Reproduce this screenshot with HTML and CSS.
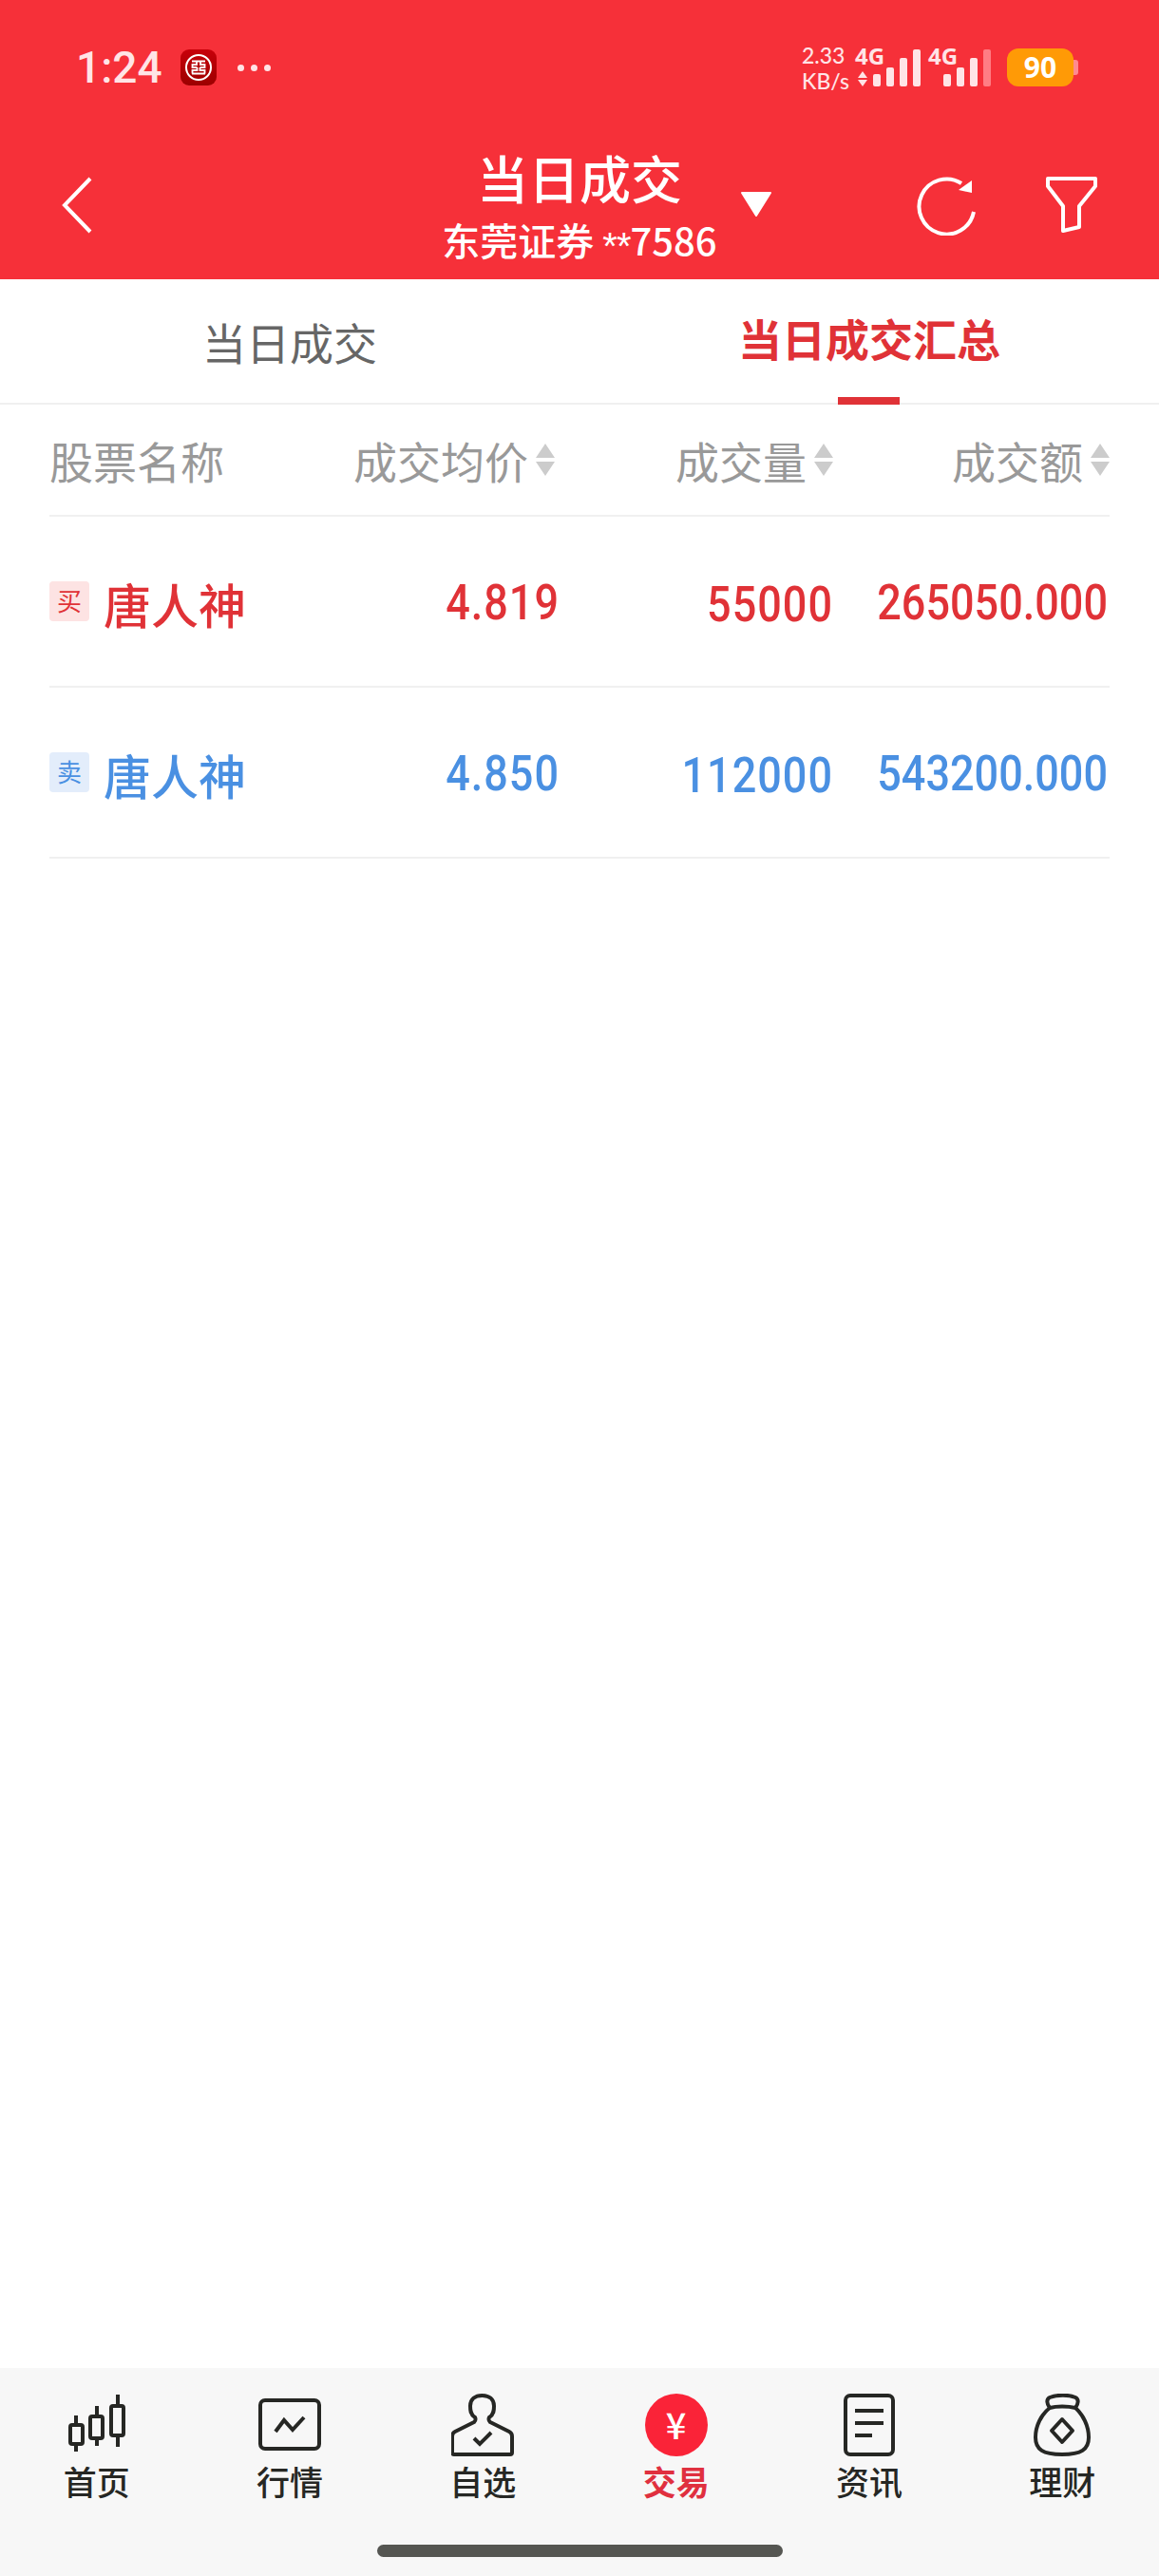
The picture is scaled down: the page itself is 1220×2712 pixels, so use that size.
FILE: index.html
```html
<!DOCTYPE html>
<html lang="zh-CN">
<head>
    <meta charset="UTF-8">
    <meta name="viewport" content="width=device-width, initial-scale=1.0">
    <title>当日成交</title>
    <link rel="stylesheet" href="styles.css">
</head>
<body>
    <div class="page">
        <header class="top">
            <div class="status">
                <div class="status-left">
                    <span class="clock">1:24</span>
                    <svg class="bank-icon" width="38" height="38" viewBox="0 0 38 38">
                        <defs>
                            <linearGradient id="bankbg" x1="0" y1="0" x2="0" y2="1">
                                <stop offset="0" stop-color="#c8000a"/>
                                <stop offset="1" stop-color="#9c0000"/>
                            </linearGradient>
                        </defs>
                        <rect width="38" height="38" rx="9" fill="url(#bankbg)"/>
                        <circle cx="19" cy="19" r="13" fill="none" stroke="#fff" stroke-width="2"/>
                        <path d="M12 12.500H26M12 25.500H26M17 12.500V16H12.500V19H17.500M21 12.500V16H25.500V19H20.500M17.500 19V22H12.500V25.500M20.500 19V22H25.500V25.500" fill="none" stroke="#fff" stroke-width="1.800"/>
                    </svg>
                    <span class="dots"><i></i><i></i><i></i></span>
                </div>
                <div class="status-right">
                    <div class="speed"><span>2.33</span><span>KB/s</span></div>
                    <div class="signal">
                        <span class="net">4G</span>
                        <svg class="updown" width="10" height="16" viewBox="0 0 10 16">
                            <path d="M5 0L10 7H0ZM5 16L0 9H10Z" fill="#ffe4e6"/>
                        </svg>
                        <div class="bars"><i class="b1"></i><i class="b2"></i><i class="b3"></i><i class="b4"></i></div>
                    </div>
                    <div class="signal signal-two">
                        <span class="net">4G</span>
                        <div class="bars"><i class="b1"></i><i class="b2"></i><i class="b3"></i><i class="b4 off"></i></div>
                    </div>
                    <div class="battery">90</div>
                </div>
            </div>
            <nav class="bar">
                <div class="bar-left">
                    <svg width="34" height="60" viewBox="0 0 34 60">
                        <path d="M31 2L4 30L31 58" fill="none" stroke="#fff" stroke-width="4"/>
                    </svg>
                </div>
                <div class="title-box">
                    <div class="title">当日成交</div>
                    <div class="account">东莞证券 <span class="stars">**</span>7586</div>
                </div>
                <div class="bar-right">
                    <svg class="caret" width="36" height="28" viewBox="0 0 36 28">
                        <path d="M3 2H33L18 26Z" fill="#fff" stroke="#fff" stroke-width="2" stroke-linejoin="round"/>
                    </svg>
                    <svg class="refresh" width="62" height="64" viewBox="0 0 62 64">
                        <path d="M60 39A29 29 0 1 1 47 9" fill="none" stroke="#fff" stroke-width="4"/>
                        <path d="M58 6V19L44 16Z" fill="#fff"/>
                    </svg>
                    <svg class="filter" width="56" height="62" viewBox="0 0 56 62">
                        <path d="M3 3H53V11L36 32V54L19 58V32L3 11Z" fill="none" stroke="#fff" stroke-width="4" stroke-linejoin="round"/>
                    </svg>
                </div>
            </nav>
        </header>

        <div class="tabs">
            <div class="tab">当日成交</div>
            <div class="tab active">当日成交汇总</div>
        </div>

        <main class="list">
            <div class="row head">
                <div class="name">股票名称</div>
                <div class="num col-avg">成交均价<svg class="sort" width="20" height="34" viewBox="0 0 20 34"><path d="M10 0L20 15H0ZM10 34L0 19H20Z" fill="#ccc"/></svg></div>
                <div class="num">成交量<svg class="sort" width="20" height="34" viewBox="0 0 20 34"><path d="M10 0L20 15H0ZM10 34L0 19H20Z" fill="#ccc"/></svg></div>
                <div class="num">成交额<svg class="sort" width="20" height="34" viewBox="0 0 20 34"><path d="M10 0L20 15H0ZM10 34L0 19H20Z" fill="#ccc"/></svg></div>
            </div>
            <div class="row deal buy">
                <div class="name"><span class="tag">买</span><span class="stock">唐人神</span></div>
                <div class="num"><span class="digits wide">4.819</span></div>
                <div class="num"><span class="digits low wide">55000</span></div>
                <div class="num"><span class="digits">265050.000</span></div>
            </div>
            <div class="row deal sell">
                <div class="name"><span class="tag">卖</span><span class="stock">唐人神</span></div>
                <div class="num"><span class="digits wide">4.850</span></div>
                <div class="num"><span class="digits low wide">112000</span></div>
                <div class="num"><span class="digits">543200.000</span></div>
            </div>
        </main>

        <footer class="dock">
            <div class="dock-items">
                <div class="dock-item">
                    <svg width="60" height="66" viewBox="0 0 60 66">
                        <g fill="none" stroke="#262724" stroke-width="4">
                            <path d="M8 23V33M8 53V61"/>
                            <rect x="2" y="33" width="13" height="20" rx="2"/>
                            <path d="M30 13V24M30 47V55"/>
                            <rect x="23" y="24" width="13" height="23" rx="2"/>
                            <path d="M52 1V13M52 44V56"/>
                            <rect x="45" y="13" width="13" height="31" rx="2"/>
                        </g>
                    </svg>
                    <span>首页</span>
                </div>
                <div class="dock-item">
                    <svg width="68" height="66" viewBox="0 0 68 66">
                        <rect x="3" y="7" width="62" height="51" rx="5" fill="none" stroke="#262724" stroke-width="4"/>
                        <path d="M19 40L28 28L37 38L49 25" fill="none" stroke="#262724" stroke-width="4"/>
                    </svg>
                    <span>行情</span>
                </div>
                <div class="dock-item">
                    <svg width="66" height="66" viewBox="0 0 66 66">
                        <path d="M25 25C20 22 20 17 20 13C20 6 25 2 32.500 2C40 2 45 6 45 13C45 17 45 22 40 25C39 27 39 28 41 30L61 40C63 41 64 43 64 45V62Q64 64 62 64H3Q1 64 1 62V45C1 43 2 41 4 40L24 30C26 28 26 27 25 25Z" fill="none" stroke="#262724" stroke-width="4" stroke-linejoin="round"/>
                        <path d="M24 47L30 53L42 41" fill="none" stroke="#262724" stroke-width="4"/>
                    </svg>
                    <span>自选</span>
                </div>
                <div class="dock-item current">
                    <div class="yen">¥</div>
                    <span>交易</span>
                </div>
                <div class="dock-item">
                    <svg width="54" height="66" viewBox="0 0 54 66">
                        <rect x="2" y="2" width="50" height="62" rx="5" fill="none" stroke="#262724" stroke-width="4"/>
                        <path d="M12 18H42M12 31H42M12 44H30" fill="none" stroke="#262724" stroke-width="4"/>
                    </svg>
                    <span>资讯</span>
                </div>
                <div class="dock-item">
                    <svg width="60" height="66" viewBox="0 0 60 66">
                        <g fill="none" stroke="#262724" stroke-width="4" stroke-linejoin="round">
                            <path d="M17 15C14 11 13 6 17 4C25 1 37 1 44 4C48 6 47 11 44 15"/>
                            <path d="M17 15C8 22 2 34 2 46C2 59 10 64 30 64C50 64 58 59 58 46C58 34 52 22 44 15C36 13 24 13 17 15Z"/>
                            <path d="M30 27L41 39L30 51L19 39Z"/>
                        </g>
                    </svg>
                    <span>理财</span>
                </div>
            </div>
            <div class="home-bar"></div>
        </footer>
    </div>
</body>
</html>
```

FILE: styles.css
```css
* {
    box-sizing: border-box;
}
body {
    margin: 0;
    background-color: #fff;
    font-family: "Noto Sans CJK SC", "Noto Sans", sans-serif;
}
.page {
    width: 1220px;
    height: 2712px;
    display: flex;
    flex-direction: column;
    overflow: hidden;
}

/* 顶部红色区域 */
.top {
    height: 294px;
    background-color: #f63039;
    color: #fff;
    flex-shrink: 0;
}
.status {
    height: 140px;
    padding: 51px 90px 0 80px;
    display: flex;
    justify-content: space-between;
    align-items: flex-start;
}
.status-left {
    display: flex;
    align-items: center;
    height: 40px;
}
.clock {
    font-family: Roboto, sans-serif;
    font-size: 46px;
    font-weight: 500;
    line-height: 40px;
    color: #ffe4e6;
    width: 110px;
}
.dots {
    display: flex;
    gap: 7px;
    margin-left: 22px;
}
.dots i {
    width: 7px;
    height: 7px;
    border-radius: 50%;
    background-color: #ffe4e6;
}
.status-right {
    display: flex;
    align-items: flex-start;
    height: 40px;
    color: #ffe4e6;
    font-family: Lato, sans-serif;
}
.speed {
    width: 56px;
    display: flex;
    flex-direction: column;
    font-size: 23px;
    font-weight: 500;
    line-height: 27px;
    margin-top: -6px;
}
.signal {
    position: relative;
    width: 69px;
    height: 40px;
    margin-right: 8px;
    display: flex;
    align-items: flex-end;
}
.signal-two {
    width: 66px;
    margin-right: 17px;
}
.net {
    position: absolute;
    left: 0;
    top: -6px;
    font-family: "Open Sans", sans-serif;
    font-size: 24px;
    font-weight: 700;
    line-height: 27px;
}
.updown {
    margin: 0 5px 0 3px;
}
.bars {
    margin-left: auto;
    display: flex;
    align-items: flex-end;
    gap: 6px;
}
.bars i {
    width: 8px;
    border-radius: 2px;
    background-color: #ffe4e6;
}
.bars .b1 {
    height: 13px;
}
.bars .b2 {
    height: 20px;
}
.bars .b3 {
    height: 30px;
}
.bars .b4 {
    height: 39px;
}
.bars .off {
    background-color: #ff7d84;
}
.battery {
    position: relative;
    width: 70px;
    height: 40px;
    border-radius: 12px;
    background-color: #ff9a06;
    color: #fff;
    font-family: "Open Sans", sans-serif;
    font-size: 30px;
    font-weight: 700;
    line-height: 40px;
    text-align: center;
}
.battery::after {
    content: "";
    position: absolute;
    left: 70px;
    top: 12px;
    width: 5px;
    height: 16px;
    border-radius: 0 3px 3px 0;
    background-color: #ff8a90;
}
.bar {
    height: 154px;
    display: grid;
    grid-template-columns: 1fr 290px 1fr;
}
.bar-left {
    padding: 46px 0 0 64px;
}
.title-box {
    text-align: center;
    padding-top: 16px;
    white-space: nowrap;
}
.title {
    font-size: 54px;
    font-weight: 500;
    line-height: 62px;
}
.account {
    font-size: 40px;
    font-weight: 500;
    line-height: 46px;
    margin-top: 11px;
}
.stars {
    font-family: "Liberation Sans", sans-serif;
    position: relative;
    top: 4px;
    letter-spacing: -1px;
}
.bar-right {
    display: flex;
    align-items: flex-start;
}
.caret {
    margin: 61px 0 0 23px;
}
.refresh {
    margin: 44px 0 0 151px;
}
.filter {
    margin: 45px 0 0 73px;
}

/* 标签页 */
.tabs {
    height: 132px;
    display: grid;
    grid-template-columns: 1fr 1fr;
    border-bottom: 2px solid #f0f0f0;
    flex-shrink: 0;
}
.tab {
    position: relative;
    text-align: center;
    font-size: 46px;
    line-height: 130px;
    color: #666;
}
.tab.active {
    color: #e03237;
    font-weight: 700;
    line-height: 122px;
}
.tab.active::after {
    content: "";
    position: absolute;
    left: 272px;
    bottom: -2px;
    width: 65px;
    height: 8px;
    background-color: #e03237;
}

/* 成交列表 */
.list {
    flex: 1;
    padding: 0 52px;
}
.row {
    display: grid;
    grid-template-columns: 248px 289px 288px 291px;
    align-items: center;
    border-bottom: 2px solid #f0f0f0;
}
.row.head {
    height: 118px;
    color: #999;
    font-size: 46px;
}
.deal {
    height: 180px;
}
.name {
    display: flex;
    align-items: center;
}
.num {
    display: flex;
    justify-content: flex-end;
    align-items: center;
}
.head .col-avg {
    padding-right: 5px;
}
.sort {
    margin-left: 8px;
}
.deal .num:last-child {
    padding-right: 2px;
}
.tag {
    width: 42px;
    height: 42px;
    border-radius: 4px;
    font-size: 26px;
    line-height: 40px;
    text-align: center;
    margin: -1px 15px 0 0;
}
.stock {
    font-size: 50px;
    line-height: 60px;
    font-weight: 500;
    padding-top: 4px;
}
.digits {
    display: inline-block;
    font-family: Roboto, sans-serif;
    font-size: 45px;
    font-weight: 500;
    line-height: 52px;
    transform: scaleY(1.15);
    padding-top: 3px;
}
.digits.wide {
    letter-spacing: 1px;
}
.digits.low {
    padding-top: 6px;
}
.buy {
    color: #e03237;
}
.buy .tag {
    background-color: #fde3e3;
}
.sell {
    color: #4a90e2;
}
.sell .tag {
    background-color: #e3edfb;
}

/* 底部导航 */
.dock {
    height: 219px;
    background-color: #f7f7f7;
    flex-shrink: 0;
    padding-top: 27px;
}
.dock-items {
    display: grid;
    grid-template-columns: repeat(6, 1fr);
}
.dock-item {
    display: flex;
    flex-direction: column;
    align-items: center;
    font-size: 35px;
    font-weight: 500;
    line-height: 46px;
    color: #262724;
}
.dock-item svg {
    display: block;
}
.dock-item > span {
    margin-top: 3px;
}
.current {
    color: #e0303f;
    font-weight: 700;
}
.yen {
    width: 66px;
    height: 66px;
    border-radius: 50%;
    background-color: #fa2338;
    color: #fff;
    font-size: 38px;
    font-weight: 500;
    line-height: 64px;
    text-align: center;
}
.home-bar {
    width: 427px;
    height: 13px;
    margin: 44px auto 0;
    border-radius: 7px;
    background-color: #555652;
}
```
